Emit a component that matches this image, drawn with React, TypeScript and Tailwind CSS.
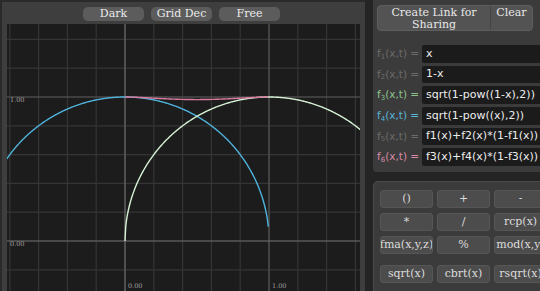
import React from 'react';

const X0 = 118;
const Y0 = 217;
const U = 144;

function curve(f: (x: number) => number, from: number, to: number) {
  const pts: string[] = [];
  for (let x = from; x <= to + 1e-9; x += 0.005) {
    const y = f(x);
    if (Number.isNaN(y)) continue;
    pts.push(`${(X0 + x * U).toFixed(2)},${(Y0 - y * U).toFixed(2)}`);
  }
  return pts.join(' ');
}

const f3 = (x: number) => Math.sqrt(1 - Math.pow(1 - x, 2));
const f4 = (x: number) => Math.sqrt(1 - Math.pow(x, 2));
const f6 = (x: number) => f3(x) + f4(x) * (1 - f3(x));

function Graph() {
  const vLines: number[] = [];
  for (let k = -4; k <= 8; k++) vLines.push(X0 + k * 28.8);
  const hLines: number[] = [];
  for (let k = -1; k <= 7; k++) hLines.push(Y0 - k * 28.8);

  return (
    <svg width="353" height="267" className="block">
      <rect width="353" height="267" fill="#1c1c1c" />
      {vLines.map((x) => (
        <line key={'v' + x} x1={x} y1={0} x2={x} y2={267} stroke="#353535" strokeWidth="1.2" />
      ))}
      {hLines.map((y) => (
        <line key={'h' + y} x1={0} y1={y} x2={353} y2={y} stroke="#353535" strokeWidth="1.2" />
      ))}
      <line x1={X0} y1={0} x2={X0} y2={267} stroke="#6a6a6a" strokeWidth="1.2" />
      <line x1={X0 + U} y1={0} x2={X0 + U} y2={267} stroke="#555" strokeWidth="1.2" />
      <line x1={0} y1={Y0} x2={353} y2={Y0} stroke="#6a6a6a" strokeWidth="1.2" />
      <line x1={0} y1={Y0 - U} x2={353} y2={Y0 - U} stroke="#555" strokeWidth="1.2" />

      <g fontFamily="'DejaVu Serif', serif" fontSize="6.5" fill="#a0a0a0">
        <text x="3" y="78">1.00</text>
        <text x="3" y="222">0.00</text>
        <text x={X0 + 3} y="264">0.00</text>
        <text x={X0 + U + 3} y="264">1.00</text>
      </g>

      <polyline points={curve(f4, -0.9, 1)} fill="none" stroke="#4fb3dc" strokeWidth="1.4" />
      <polyline points={curve(f3, 0, 1.7)} fill="none" stroke="#d6f2d6" strokeWidth="1.4" />
      <polyline points={curve(f6, 0, 1)} fill="none" stroke="#d97a9e" strokeWidth="1.4" />
    </svg>
  );
}

const fns = [
  { n: '1', expr: 'x', color: 'text-[#6b6b6b]' },
  { n: '2', expr: '1-x', color: 'text-[#6b6b6b]' },
  { n: '3', expr: 'sqrt(1-pow((1-x),2))', color: 'text-[#8fc48f]' },
  { n: '4', expr: 'sqrt(1-pow((x),2))', color: 'text-[#58b4d8]' },
  { n: '5', expr: 'f1(x)+f2(x)*(1-f1(x))', color: 'text-[#6b6b6b]' },
  { n: '6', expr: 'f3(x)+f4(x)*(1-f3(x))', color: 'text-[#d98aa6]' },
];

const keys = [
  ['()', '+', '-'],
  ['*', '/', 'rcp(x)'],
  ['fma(x,y,z)', '%', 'mod(x,y)'],
];

const keys2 = ['sqrt(x)', 'cbrt(x)', 'rsqrt(x)'];

function Key({ label }: { label: string }) {
  return (
    <div className="h-[18px] rounded-[3px] bg-[#4c4c4c] border border-[#565656] flex items-center justify-center text-[11px] text-[#dcdcdc] whitespace-nowrap overflow-hidden">
      {label}
    </div>
  );
}

export default function App() {
  return (
    <div
      className="w-[540px] h-[291px] overflow-hidden bg-[#242424] flex"
      style={{ fontFamily: "'DejaVu Serif', serif" }}
    >
      {/* Graph panel */}
      <div className="w-[365px] shrink-0 h-full bg-[#3e3e3e] border-l-2 border-t-2 border-[#2a2a2a] flex flex-col">
        <div className="h-[22px] flex items-center justify-center gap-[7px] pt-[1px] pr-[4px]">
          {['Dark', 'Grid Dec', 'Free'].map((b) => (
            <div
              key={b}
              className="w-[61px] h-[14px] rounded-[5px] bg-[#5c5c5c] text-[11px] leading-none text-[#ececec] flex items-center justify-center"
            >
              {b}
            </div>
          ))}
        </div>
        <div className="pl-[5px]">
          <Graph />
        </div>
      </div>

      {/* Right side */}
      <div className="ml-[8px] flex-1 flex flex-col min-w-0">
        <div className="h-[172px] bg-[#3b3b3b] rounded-bl-[4px] pl-[4px] pt-[5px]">
          <div className="flex h-[26px] w-[156px] rounded-[4px] bg-[#535353] border border-[#5e5e5e] text-[11px] leading-[12px] text-[#e8e8e8]">
            <div className="w-[112px] text-center pt-[1px]">
              Create Link for
              <br />
              Sharing
            </div>
            <div className="flex-1 border-l border-[#444] text-center pt-[1px]">Clear</div>
          </div>
          <div className="mt-[14px] flex flex-col gap-[3px]">
            {fns.map((f) => (
              <div key={f.n} className="flex items-center h-[17.7px]">
                <div
                  className={`w-[45px] shrink-0 text-[10.5px] ${f.color}`}
                  style={{ fontFamily: "'DejaVu Sans', sans-serif" }}
                >
                  f<sub className="text-[7px]">{f.n}</sub>(x,t) =
                </div>
                <div
                  className="flex-1 h-full bg-[#1b1b1b] rounded-l-[2px] pl-[4px] text-[11px] text-[#ededed] flex items-center whitespace-nowrap overflow-hidden"
                  style={{ fontFamily: "'DejaVu Sans', sans-serif" }}
                >
                  {f.expr}
                </div>
              </div>
            ))}
          </div>
        </div>
        <div className="mt-[9px] flex-1 bg-[#3b3b3b] rounded-tl-[5px] border-t border-l border-[#4a4a4a] pl-[6px] pt-[8px] overflow-hidden">
          <div className="grid grid-cols-[53px_53px_53px] gap-x-[4px] gap-y-[5px]">
            {keys.flat().map((k) => (
              <Key key={k} label={k} />
            ))}
          </div>
          <div className="grid grid-cols-[53px_53px_53px] gap-x-[4px] mt-[11px]">
            {keys2.map((k) => (
              <Key key={k} label={k} />
            ))}
          </div>
        </div>
      </div>
    </div>
  );
}
